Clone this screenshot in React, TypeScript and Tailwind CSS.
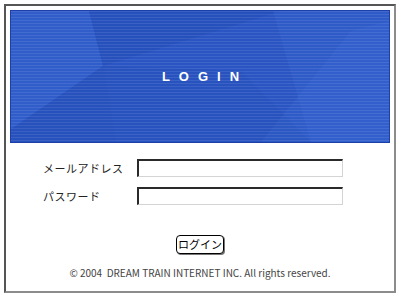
import React from "react";

const FONT = { fontFamily: '"Noto Sans CJK JP", "Noto Sans", sans-serif' };

function Banner() {
  return (
    <div className="relative h-[133px] overflow-hidden border border-[#1e3fa8] bg-[#2a55c2]">
      {/* decorative facets */}
      <svg className="absolute inset-0 h-full w-full" viewBox="0 0 378 131" preserveAspectRatio="none">
        <polygon points="0,0 78,0 92,55 0,118" fill="#3a6ad6" opacity="0.4" />
        <polygon points="92,55 0,118 0,131 105,131" fill="#2148b0" opacity="0.3" />
        <polygon points="78,0 160,0 270,0 92,55" fill="#1f46ae" opacity="0.3" />
        <polygon points="262,0 378,0 378,131 300,131" fill="#3a6ad6" opacity="0.3" />
        <polygon points="340,20 378,10 378,131 250,131" fill="#4275da" opacity="0.2" />
        <polygon points="92,55 230,60 300,131 105,131" fill="#2550b8" opacity="0.25" />
      </svg>
      <div className="absolute inset-0 bg-[repeating-linear-gradient(to_bottom,rgba(255,255,255,0.09)_0px,rgba(255,255,255,0.09)_1px,transparent_1px,transparent_3px)]" />
      <div className="relative flex h-full items-center justify-center">
        <span
          className="pl-[10px] text-[13px] font-bold tracking-[9px] text-white"
          style={{ fontFamily: '"Liberation Sans", Arial, sans-serif' }}
        >
          LOGIN
        </span>
      </div>
    </div>
  );
}

function Field({ label, type }: { label: string; type: string }) {
  return (
    <div className="flex items-center">
      <span className="w-[94px] text-[11px] tracking-[0.5px] text-[#222]">{label}</span>
      <input
        type={type}
        className="h-[18px] w-[206px] border-t-2 border-l-2 border-r border-b border-t-[#2a2a2a] border-l-[#2a2a2a] border-r-[#d4d4d4] border-b-[#d4d4d4] bg-white outline-none"
      />
    </div>
  );
}

export default function App() {
  return (
    <div className="h-[297px] w-[400px] bg-white p-1" style={FONT}>
      <div className="h-[289px] w-[392px] border-2 border-t-[#555] border-l-[#555] border-r-[#8c8c8c] border-b-[#8c8c8c] p-1">
        <Banner />
        <div className="flex flex-col gap-[10px] pt-[16px] pl-[33px]">
          <Field label="メールアドレス" type="text" />
          <Field label="パスワード" type="password" />
        </div>
        <div className="flex justify-center pt-[30px]">
          <button className="h-[19px] w-[48px] rounded-[4px] border border-black bg-white text-[11px] leading-none text-black shadow-[1px_1px_0_#777]">
            ログイン
          </button>
        </div>
        <p className="pt-[11px] text-center text-[10px] text-[#444]">
          © 2004&nbsp; DREAM TRAIN INTERNET INC. All rights reserved.
        </p>
      </div>
    </div>
  );
}
